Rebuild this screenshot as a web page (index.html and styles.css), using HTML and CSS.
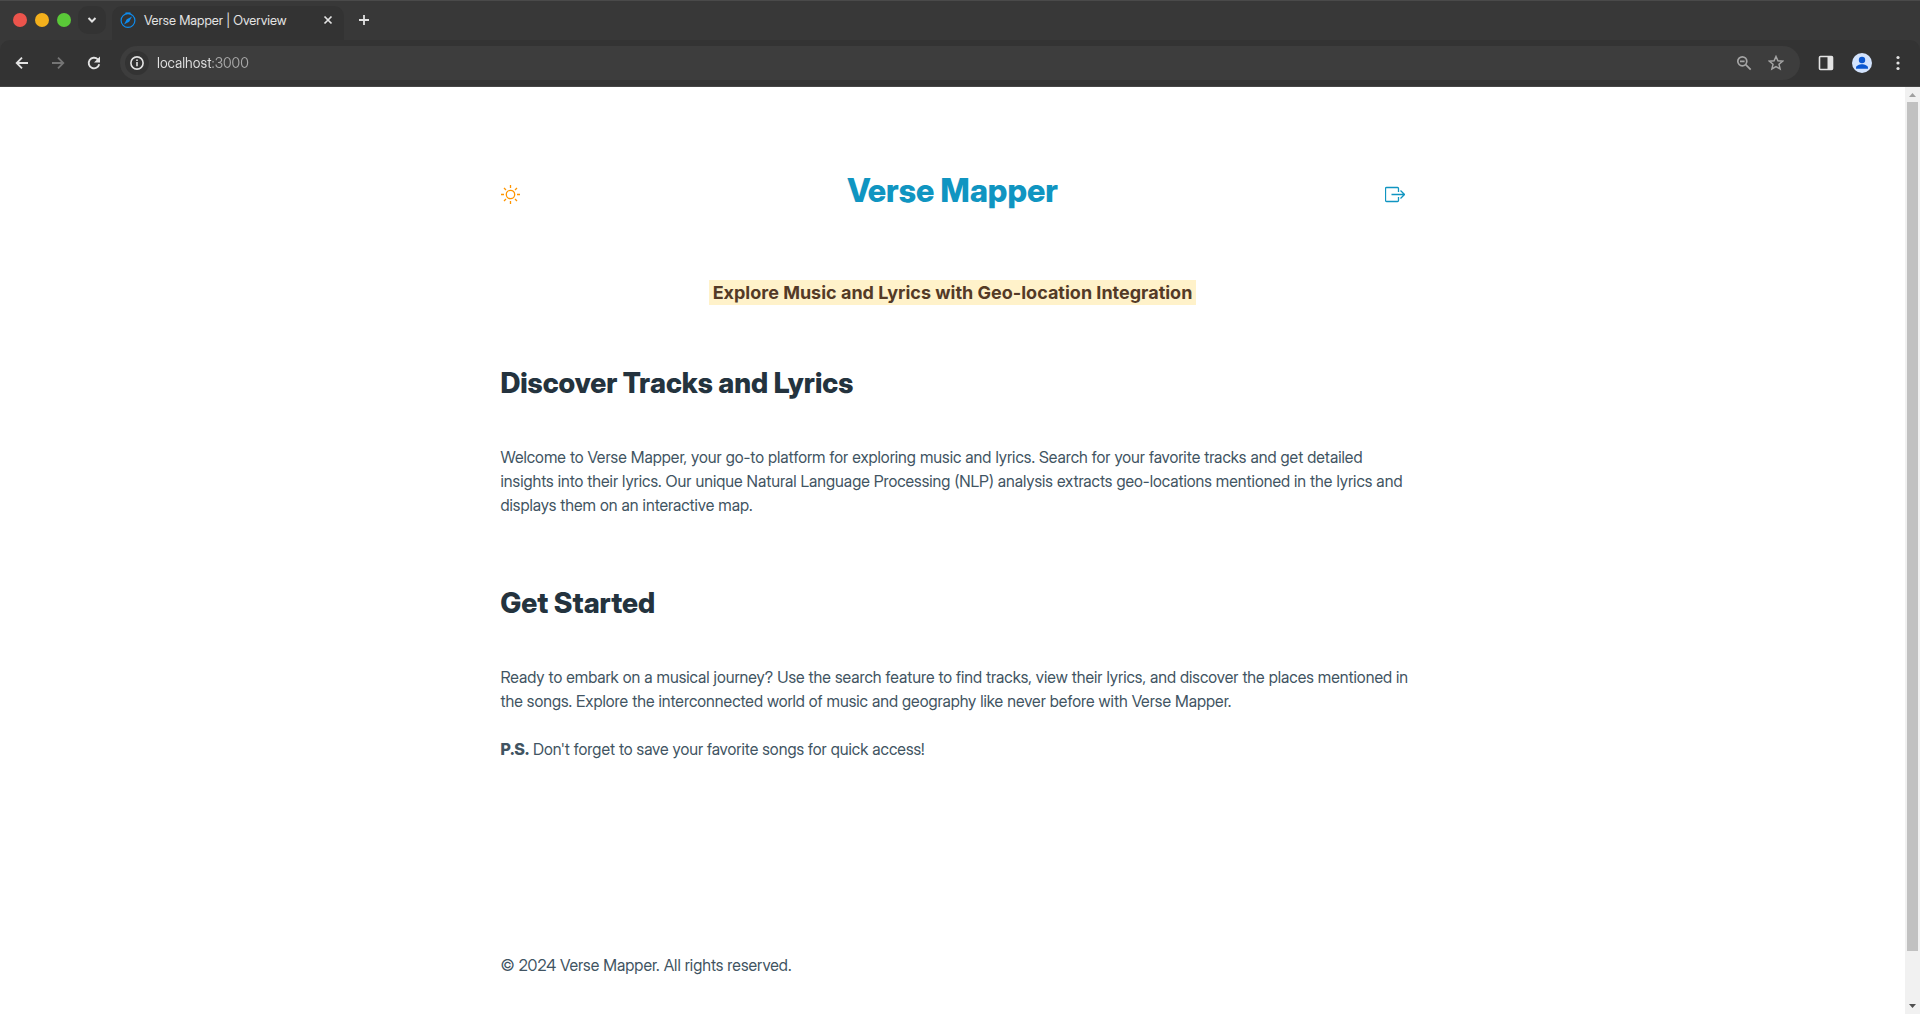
FILE: index.html
```html
<!DOCTYPE html>
<html lang="en">
<head>
<meta charset="utf-8">
<meta name="viewport" content="width=device-width, initial-scale=1">
<title>Verse Mapper | Overview</title>
<link rel="stylesheet" href="styles.css">
</head>
<body>
<div class="browser">
  <div class="tab-strip">
    <div class="lights">
      <button class="light light-close" aria-label="Close window"></button>
      <button class="light light-minimize" aria-label="Minimize window"></button>
      <button class="light light-zoom" aria-label="Zoom window"></button>
    </div>
    <button class="tab-search" aria-label="Search tabs">
      <svg width="12" height="12" viewBox="0 0 12 12"><path d="M2.500 4l3.500 3.500L9.500 4" fill="none" stroke="currentColor" stroke-width="2"/></svg>
    </button>
    <div class="tab">
      <svg width="16" height="16" viewBox="0 0 16 16" fill="none" stroke="#0d8cf0"><circle cx="8" cy="8.500" r="6.900" stroke-width="1.200"/><path d="M5.500 1.200h5" stroke-width="1.600"/><path d="M12 4.500L9.200 9.700 4 12.500l2.800-5.200z" fill="#0d8cf0" stroke="none"/></svg>
      <span class="tab-title">Verse Mapper | Overview</span>
      <button class="icon-button tab-close" aria-label="Close tab">
        <svg width="10" height="10" viewBox="0 0 10 10"><path d="M1.500 1.500l7 7M8.500 1.500l-7 7" stroke="currentColor" stroke-width="1.700"/></svg>
      </button>
    </div>
    <button class="icon-button new-tab" aria-label="New tab">
      <svg width="12" height="12" viewBox="0 0 12 12"><path d="M6 1v10M1 6h10" stroke="currentColor" stroke-width="1.800"/></svg>
    </button>
  </div>
  <div class="toolbar">
    <div class="nav-buttons">
      <button class="icon-button" aria-label="Back">
        <svg width="16" height="16" viewBox="0 0 16 16" fill="none" stroke="currentColor" stroke-width="1.800"><path d="M14 8H3M8 2.700L2.700 8 8 13.300"/></svg>
      </button>
      <button class="icon-button dim" aria-label="Forward">
        <svg width="16" height="16" viewBox="0 0 16 16" fill="none" stroke="currentColor" stroke-width="1.800"><path d="M2 8h11M8 2.700L13.300 8 8 13.300"/></svg>
      </button>
      <button class="icon-button" aria-label="Reload">
        <svg width="16" height="16" viewBox="0 0 16 16"><path d="M13.200 9.200A5.300 5.300 0 1 1 11.800 4.300L13.200 5.700" fill="none" stroke="currentColor" stroke-width="1.900"/><path d="M14 1.500v6H8z" fill="currentColor"/></svg>
      </button>
    </div>
    <div class="omnibox">
      <button class="site-info" aria-label="View site information">
        <svg width="14" height="14" viewBox="0 0 14 14"><circle cx="7" cy="7" r="6.100" fill="none" stroke="currentColor" stroke-width="1.600"/><path d="M7 6v4.300M7 3.500v1.600" stroke="currentColor" stroke-width="1.600"/></svg>
      </button>
      <input class="address" type="text" aria-label="Address" value="localhost:3000">
      <button class="icon-button soft" aria-label="Zoom level">
        <svg width="16" height="16" viewBox="0 0 16 16" fill="none" stroke="currentColor" stroke-width="1.700"><circle cx="6.300" cy="6.300" r="4.500"/><path d="M9.700 9.700l5 5M4 6.300h4.600"/></svg>
      </button>
      <button class="icon-button soft" aria-label="Bookmark this tab">
        <svg width="16" height="16" viewBox="0 0 16 16"><path d="M8 1.500l1.900 4.300 4.700.4-3.600 3.100 1.100 4.600L8 11.500l-4.100 2.400L5 9.300 1.400 6.200l4.700-.4z" fill="none" stroke="currentColor" stroke-width="1.500"/></svg>
      </button>
    </div>
    <div class="actions">
      <button class="icon-button" aria-label="Side panel">
        <svg width="16" height="16" viewBox="0 0 16 16"><rect x="1.500" y="1.500" width="13" height="13" rx="1" fill="none" stroke="currentColor" stroke-width="1.600"/><path d="M9.500 1.500h5v13h-5z" fill="currentColor"/></svg>
      </button>
      <button class="profile" aria-label="Profile">
        <svg width="20" height="20" viewBox="0 0 20 20"><circle cx="10" cy="10" r="10" fill="#d3e3fd"/><circle cx="10" cy="7" r="3.200" fill="#0b57d0"/><path d="M4 15.800v-1.300c0-2 3.500-3.300 6-3.300s6 1.300 6 3.300v1.300z" fill="#0b57d0"/></svg>
      </button>
      <button class="icon-button" aria-label="Menu">
        <svg width="16" height="16" viewBox="0 0 16 16" fill="currentColor"><circle cx="8" cy="2.500" r="1.600"/><circle cx="8" cy="8" r="1.600"/><circle cx="8" cy="13.500" r="1.600"/></svg>
      </button>
    </div>
  </div>
</div>
<div class="viewport">
  <div class="page">
    <header class="page-header">
      <button class="page-icon sun" aria-label="Toggle theme">
        <svg width="20" height="20" viewBox="0 0 20 20" fill="none" stroke="currentColor" stroke-width="1.300"><circle cx="9.500" cy="10.500" r="4.200"/><path d="M9.500 1v3M9.500 17v3M0 10.500h3M16 10.500h3M3 4l2 2M14 15l2 2M3 17l2-2M14 6l2-2"/></svg>
      </button>
      <h1>Verse Mapper</h1>
      <a class="page-icon exit" href="#logout" aria-label="Log out">
        <svg width="20" height="20" viewBox="0 0 20 20" fill="none" stroke="currentColor" stroke-width="1.300"><path d="M13.500 8V4.500a1 1 0 0 0-1-1h-11a1 1 0 0 0-1 1v12a1 1 0 0 0 1 1h11a1 1 0 0 0 1-1V13M6.500 10.500h12.500M15.500 6.500l4 4-4 4"/></svg>
      </a>
    </header>
    <main>
      <p class="tagline"><mark>Explore Music and Lyrics with Geo-location Integration</mark></p>
      <section>
        <h2>Discover Tracks and Lyrics</h2>
        <p>Welcome to Verse Mapper, your go-to platform for exploring music and lyrics. Search for your favorite tracks and get detailed insights into their lyrics. Our unique Natural Language Processing (NLP) analysis extracts geo-locations mentioned in the lyrics and displays them on an interactive map.</p>
      </section>
      <section>
        <h2>Get Started</h2>
        <p>Ready to embark on a musical journey? Use the search feature to find tracks, view their lyrics, and discover the places mentioned in the songs. Explore the interconnected world of music and geography like never before with Verse Mapper.</p>
        <p><strong>P.S.</strong> Don't forget to save your favorite songs for quick access!</p>
      </section>
    </main>
    <footer>© 2024 Verse Mapper. All rights reserved.</footer>
  </div>
  <div class="scrollbar" aria-hidden="true">
    <svg width="15" height="15" viewBox="0 0 15 15"><path d="M4 10l3.500-4L11 10z" fill="#a0a0a0"/></svg>
    <div class="scroll-track"><div class="scroll-thumb"></div></div>
    <svg width="15" height="15" viewBox="0 0 15 15"><path d="M4 5l3.500 4L11 5z" fill="#505050"/></svg>
  </div>
</div>
</body>
</html>
```
FILE: styles.css
```css
* {
  box-sizing: border-box;
}

body {
  margin: 0;
  min-height: 100vh;
  display: flex;
  flex-direction: column;
  background: #fff;
  color: #415462;
  font: 16px/24px "Inter Display", Inter, sans-serif;
}

button {
  padding: 0;
  border: 0;
  background: none;
  color: inherit;
  font: inherit;
}

svg {
  display: block;
}

/* Browser frame */

.browser {
  background: #383838;
  border-top: 1px solid #4a4a4a;
  color: #e3e3e3;
}

.tab-strip {
  display: flex;
  height: 39px;
  padding-left: 13px;
}

.lights {
  display: flex;
  align-items: center;
  gap: 8px;
  padding-bottom: 1px;
}

.light {
  width: 14px;
  height: 14px;
  border-radius: 50%;
}

.light-close {
  background: #ec544c;
}

.light-minimize {
  background: #f3b01c;
}

.light-zoom {
  background: #5ac938;
}

.tab-search {
  display: grid;
  place-items: center;
  align-self: center;
  width: 28px;
  height: 28px;
  margin: 0 6px 1px 7px;
  border-radius: 10px;
  background: #333;
}

.tab {
  display: flex;
  align-items: center;
  gap: 8px;
  width: 232px;
  margin-top: 5px;
  padding: 0 8px 6px;
  border-radius: 10px 10px 0 0;
  background: #333;
  font-size: 13px;
}

.tab-title {
  flex: 1;
}

.icon-button {
  display: grid;
  place-items: center;
  width: 16px;
  height: 16px;
}

.new-tab {
  align-self: center;
  margin: 0 0 1px 12px;
}

.toolbar {
  display: flex;
  align-items: center;
  height: 47px;
  padding: 0 14px;
  border-radius: 10px 10px 0 0;
  border-bottom: 1px solid #454545;
  background: #333;
}

.nav-buttons {
  display: flex;
  gap: 20px;
  margin-right: 18px;
}

.dim {
  color: #757575;
}

.soft {
  color: #a5a5a5;
}

.omnibox {
  display: flex;
  flex: 1;
  align-items: center;
  gap: 16px;
  height: 34px;
  padding: 0 16px 0 5px;
  border-radius: 17px;
  background: #3d3d3d;
}

.site-info {
  display: grid;
  place-items: center;
  width: 24px;
  height: 24px;
  border-radius: 50%;
  background: #333;
}

.address {
  flex: 1;
  min-width: 0;
  margin-left: -8px;
  padding: 0;
  border: 0;
  outline: 0;
  background: linear-gradient(90deg, #e3e3e3 54px, #a8a8a8 54px);
  background-clip: text;
  -webkit-text-fill-color: transparent;
  color: #e3e3e3;
  font: 14px/20px "Inter Display", Inter, sans-serif;
}

.actions {
  display: flex;
  align-items: center;
  gap: 18px;
  margin-left: 18px;
}

/* Page */

.viewport {
  display: flex;
  flex: 1;
}

.page {
  flex: 1;
  padding: 80px 24px 36px;
}

.page-header,
main,
footer {
  max-width: 904px;
  margin: 0 auto;
}

.page-header {
  display: flex;
  align-items: center;
  justify-content: space-between;
}

.page-icon {
  padding-top: 6px;
}

.sun {
  color: #ff9500;
}

.exit {
  color: #1095c1;
}

h1,
h2,
strong {
  font-weight: 800;
}

h1 {
  margin: 0;
  color: #1095c1;
  font-size: 32px;
  line-height: 48px;
}

.tagline {
  margin: 64px 0 56px;
  color: #543a26;
  font: 700 18px/27px Inter, sans-serif;
  text-align: center;
}

mark {
  padding: 2px 4px;
  background: #fff2ca;
  color: inherit;
}

section {
  margin: 0 -8px 65px 0;
}

h2 {
  margin: 0 0 41px;
  color: #24333e;
  font-size: 28px;
  line-height: 42px;
}

p {
  margin: 0 0 24px;
}

section p:last-child {
  margin-bottom: 0;
}

footer {
  padding-top: 127px;
}

.scrollbar {
  display: flex;
  flex-direction: column;
  width: 15px;
  background: #f1f1f1;
}

.scroll-track {
  flex: 1;
  padding: 0 2px;
}

.scroll-thumb {
  height: 94.6%;
  background: #c1c1c1;
}
```
